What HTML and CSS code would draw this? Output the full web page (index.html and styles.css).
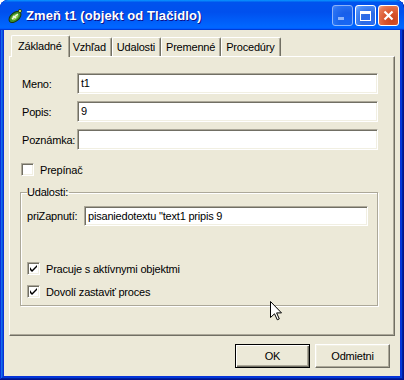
FILE: index.html
```html
<!DOCTYPE html>
<html>
<head>
<title>Zmeň t1</title>
<link rel="stylesheet" href="styles.css">
</head>
<body>
  <div class="window">
    <div class="titlebar">
      <svg class="app-icon" width="16" height="16" viewBox="0 0 16 16">
        <ellipse cx="8" cy="9" rx="7" ry="4.2" transform="rotate(-40 8 9)" fill="#3f8f27" stroke="#17360c" stroke-width="1"/>
        <ellipse cx="8" cy="9" rx="4" ry="2.2" transform="rotate(-40 8 9)" fill="#8fd14f"/>
        <path d="M5 11 L11 6 M6 8 L9 10" stroke="#f2f6e8" stroke-width="1.2"/>
        <circle cx="13" cy="3" r="1.6" fill="#d8e85a" stroke="#17360c" stroke-width="0.8"/>
      </svg>
      <span class="title">Zmeň t1 (objekt od Tlačidlo)</span>
      <div class="caption-buttons">
        <span class="cap-btn minimize"><span class="min-bar"></span></span>
        <span class="cap-btn maximize"><span class="max-box"></span></span>
        <span class="cap-btn close">
          <svg width="11" height="11" viewBox="0 0 11 11"><path d="M1.5 1.5 L9.5 9.5 M9.5 1.5 L1.5 9.5" stroke="#fff" stroke-width="2.2"/></svg>
        </span>
      </div>
    </div>

    <div class="client">
      <div class="tabs">
        <span class="tab active">Základné</span>
        <span class="tab">Vzhľad</span>
        <span class="tab">Udalosti</span>
        <span class="tab">Premenné</span>
        <span class="tab">Procedúry</span>
      </div>

      <div class="panel">
        <div class="fields">
          <div class="field-row">
            <span class="label">Meno:</span>
            <span class="textbox">t1</span>
          </div>
          <div class="field-row">
            <span class="label">Popis:</span>
            <span class="textbox">9</span>
          </div>
          <div class="field-row">
            <span class="label">Poznámka:</span>
            <span class="textbox"></span>
          </div>
        </div>

        <div class="check toggle"><span class="box"></span>Prepínač</div>

        <fieldset class="group">
          <legend>Udalosti:</legend>
          <div class="field-row event-row">
            <span class="label">priZapnutí:</span>
            <span class="textbox">pisaniedotextu "text1 pripis 9</span>
          </div>
          <div class="check">
            <span class="box"><svg width="7" height="7" viewBox="0 0 7 7"><path d="M0 2 L0 5 L2 7 L7 2 L7 0 L2 5 Z" fill="#000"/></svg></span>Pracuje s aktívnymi objektmi
          </div>
          <div class="check">
            <span class="box"><svg width="7" height="7" viewBox="0 0 7 7"><path d="M0 2 L0 5 L2 7 L7 2 L7 0 L2 5 Z" fill="#000"/></svg></span>Dovolí zastaviť proces
          </div>
        </fieldset>

        <svg class="cursor" width="12" height="20" viewBox="0 0 12 20">
          <path d="M0.5 0.5 L0.5 16.5 L4.5 12.8 L7.3 18.8 L9.3 17.9 L6.6 11.9 L11.5 11.9 Z" fill="#fff" stroke="#000" stroke-width="1" stroke-linejoin="miter"/>
        </svg>
      </div>

      <div class="buttons">
        <button class="btn default">OK</button>
        <button class="btn">Odmietni</button>
      </div>
    </div>
  </div>
</body>
</html>
```

FILE: styles.css
```css
* {
  margin: 0;
  padding: 0;
  box-sizing: border-box;
}

body {
  background: #ffffff;
  font-family: "Liberation Sans", Arial, sans-serif;
  font-size: 11px;
  letter-spacing: -0.2px;
  color: #000000;
}

.window {
  width: 404px;
  height: 380px;
  display: flex;
  flex-direction: column;
  background: #0831d9;
  border-radius: 8px 8px 0 0;
  box-shadow: inset -1px -1px #00138c, inset 1px 1px #0831d9,
    inset -2px -2px #001ea0, inset 2px 2px #166aee,
    inset -3px -3px #003bda, inset 3px 3px #0855dd;
  overflow: hidden;
}

/* title bar */
.titlebar {
  height: 30px;
  display: flex;
  align-items: center;
  padding: 0 5px 0 7px;
  border-radius: 8px 8px 0 0;
  background: linear-gradient(180deg, #0997ff, #0053ee 8%, #0050ee 40%, #0066ff 88%, #0066ff 93%, #005bff 95%, #003dd7 96%, #003dd7);
}

.app-icon {
  flex: none;
  margin-top: 1px;
}

.title {
  margin-left: 3px;
  color: #ffffff;
  font-size: 13px;
  font-weight: bold;
  letter-spacing: 0.1px;
  text-shadow: 1px 1px #0f1089;
  flex: 1;
}

.caption-buttons {
  display: flex;
  gap: 2px;
  margin-top: 1px;
}

.cap-btn {
  width: 21px;
  height: 21px;
  border: 1px solid #ffffff;
  border-radius: 3px;
  display: flex;
  align-items: center;
  justify-content: center;
  position: relative;
  background: radial-gradient(circle at 75% 80%, #2a6cf0 0%, #2d6be4 40%, #4d8ff8 80%, #8cb8ff 100%);
}

.cap-btn.minimize {
  opacity: 0.55;
}

.min-bar {
  position: absolute;
  left: 5px;
  bottom: 5px;
  width: 6px;
  height: 3px;
  background: #ffffff;
}

.max-box {
  width: 11px;
  height: 10px;
  border: 1px solid #ffffff;
  border-top-width: 3px;
}

.cap-btn.close {
  background: radial-gradient(circle at 70% 75%, #c9431d 0%, #d8542c 40%, #e87a55 80%, #f3b59d 100%);
}

/* client area */
.client {
  flex: 1;
  margin: 0 4px 4px 4px;
  background: #ece9d8;
  padding: 5px 5px 0 5px;
  display: flex;
  flex-direction: column;
}

.tabs {
  display: flex;
  align-items: flex-end;
  height: 21px;
  padding-left: 4px;
  position: relative;
  z-index: 1;
}

.tab {
  height: 19px;
  padding: 3px 5px 0 4px;
  background: #ece9d8;
  border-top: 1px solid #ffffff;
  border-left: 1px solid #ffffff;
  border-right: 1px solid #716f64;
  box-shadow: inset -1px 0 #aca899;
  border-radius: 2px 2px 0 0;
  white-space: nowrap;
}

.tab.active {
  height: 22px;
  margin: 0 -1px -1px -2px;
  padding: 4px 7px 0 6px;
  position: relative;
  z-index: 2;
}

.tab.active + .tab {
  border-left: none;
}

.panel {
  height: 280px;
  position: relative;
  border: 1px solid;
  border-color: #ffffff #716f64 #716f64 #ffffff;
  box-shadow: inset -1px -1px #aca899;
  padding: 16px 16px 0 12px;
}

.fields {
  display: flex;
  flex-direction: column;
  gap: 7px;
}

.field-row {
  display: flex;
  align-items: center;
}

.label {
  width: 55px;
  flex: none;
  white-space: nowrap;
}

.textbox {
  flex: 1;
  height: 21px;
  background: #ffffff;
  border: 1px solid;
  border-color: #aca899 #ffffff #ffffff #aca899;
  box-shadow: inset 1px 1px #716f64, inset -1px -1px #f1efe2;
  padding: 3px 0 0 3px;
  white-space: nowrap;
  overflow: hidden;
}

.check {
  display: flex;
  align-items: center;
  gap: 6px;
  height: 13px;
}

.check.toggle {
  margin: 13px 0 0 -1px;
}

.box {
  width: 13px;
  height: 13px;
  flex: none;
  background: #ffffff;
  border: 1px solid;
  border-color: #aca899 #ffffff #ffffff #aca899;
  box-shadow: inset 1px 1px #716f64, inset -1px -1px #f1efe2;
  display: flex;
  align-items: center;
  justify-content: center;
}

.group {
  margin: 10px 0 0 -2px;
  height: 120px;
  border: 1px solid #aca899;
  box-shadow: inset 1px 1px #ffffff, 1px 1px #ffffff;
  padding: 7px 9px 0 6px;
}

.group legend {
  margin-left: 0;
  padding: 0 1px 0 0;
  line-height: 13px;
}

.event-row .label {
  width: 57px;
}

.event-row .textbox {
  height: 20px;
}

.group .check {
  margin-top: 10px;
}

.group .event-row + .check {
  margin-top: 36px;
}

.cursor {
  position: absolute;
  left: 260px;
  top: 244px;
}

/* dialog buttons */
.buttons {
  display: flex;
  justify-content: flex-end;
  gap: 5px;
  padding: 8px 5px 0 0;
}

.btn {
  width: 75px;
  height: 24px;
  font-family: "Liberation Sans", Arial, sans-serif;
  font-size: 11px;
  letter-spacing: -0.2px;
  color: #000000;
  background: #ece9d8;
  border: 1px solid;
  border-color: #ffffff #716f64 #716f64 #ffffff;
  box-shadow: inset -1px -1px #aca899, inset 1px 1px #f1efe2;
}

.btn.default {
  border: 1px solid #000000;
  box-shadow: inset 1px 1px #ffffff, inset -1px -1px #716f64, inset -2px -2px #aca899;
}
```
